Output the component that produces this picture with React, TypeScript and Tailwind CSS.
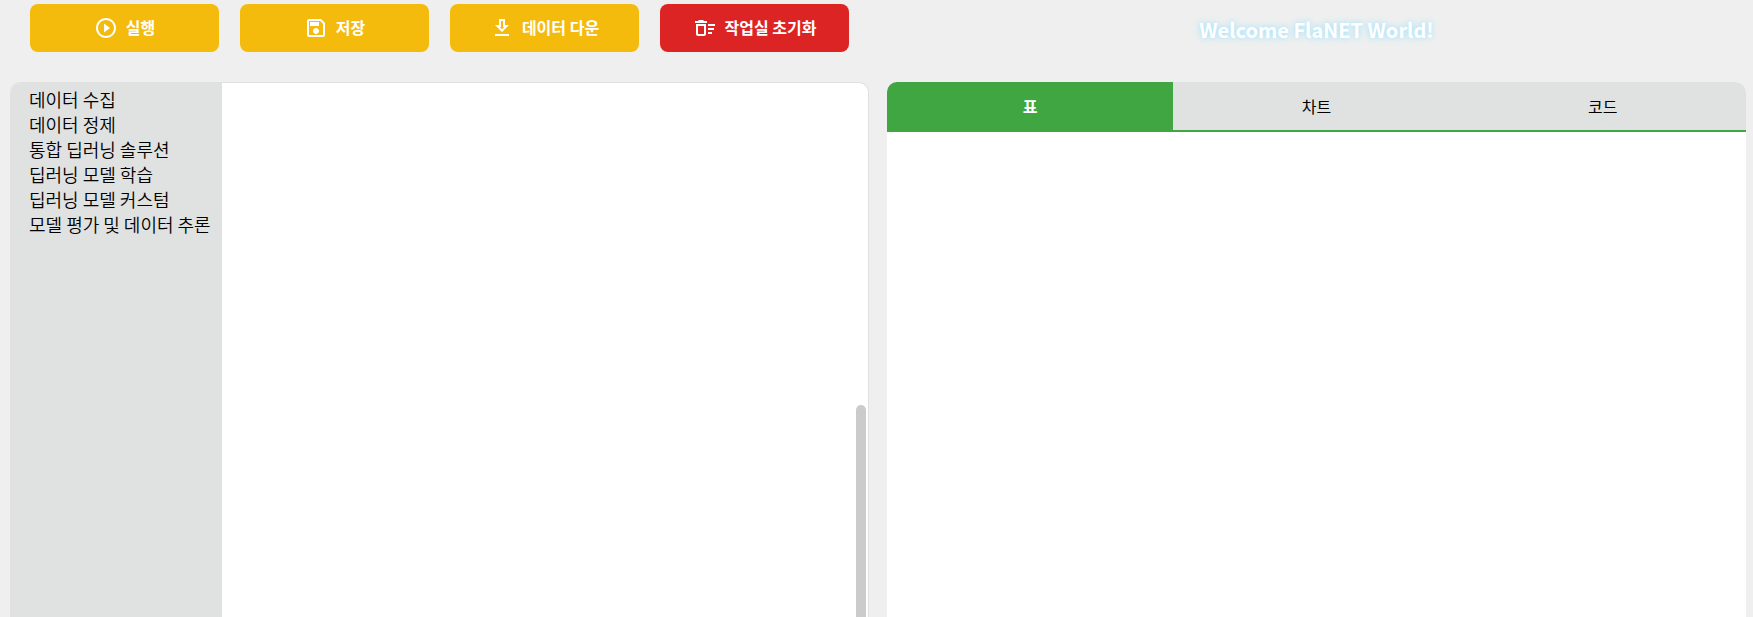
import React, { useState } from "react";

type Action = { label: string; icon: string; tone: string };

const actions: Action[] = [
  {
    label: "실행",
    icon: "M12 2C6.48 2 2 6.48 2 12s4.48 10 10 10 10-4.48 10-10S17.52 2 12 2zm0 18c-4.41 0-8-3.59-8-8s3.59-8 8-8 8 3.59 8 8-3.59 8-8 8zm-2-3.5l6-4.5-6-4.5z",
    tone: "bg-[#f5bb0c] hover:bg-[#e5ad05]",
  },
  {
    label: "저장",
    icon: "M17 3H5c-1.11 0-2 .9-2 2v14c0 1.1.89 2 2 2h14c1.1 0 2-.9 2-2V7l-4-4zm2 16H5V5h11.17L19 7.83V19zm-7-7c-1.66 0-3 1.34-3 3s1.34 3 3 3 3-1.34 3-3-1.34-3-3-3zM6 6h9v4H6z",
    tone: "bg-[#f5bb0c] hover:bg-[#e5ad05]",
  },
  {
    label: "데이터 다운",
    icon: "M19 9h-4V3H9v6H5l7 7 7-7zm-8 2V5h2v6h1.17L12 13.17 9.83 11H11zm-6 7h14v2H5z",
    tone: "bg-[#f5bb0c] hover:bg-[#e5ad05]",
  },
  {
    label: "작업실 초기화",
    icon: "M15 16h4v2h-4zm0-8h7v2h-7zm0 4h6v2h-6zM3 18c0 1.1.9 2 2 2h6c1.1 0 2-.9 2-2V8H3v10zm2-8h6v8H5v-8zm5-6H6L5 5H2v2h12V5h-3z",
    tone: "bg-[#dc2424] hover:bg-[#c41c1c]",
  },
];

const categories = [
  "데이터 수집",
  "데이터 정제",
  "통합 딥러닝 솔루션",
  "딥러닝 모델 학습",
  "딥러닝 모델 커스텀",
  "모델 평가 및 데이터 추론",
];

const tabs = ["표", "차트", "코드"];

export default function App() {
  const [active, setActive] = useState(0);

  return (
    <div className="grid h-screen grid-cols-2 grid-rows-[auto_1fr] gap-x-[18px] overflow-hidden bg-[#efefef] pr-[7px] pl-[10px] font-['Noto_Sans_CJK_KR','Noto_Sans',sans-serif] text-black">
      <div className="grid h-[82px] grid-cols-4 items-start gap-[21px] px-5 pt-1">
        {actions.map((action) => (
          <button
            key={action.label}
            type="button"
            className={`flex h-12 items-center justify-center gap-2 rounded-lg text-base font-bold whitespace-nowrap text-white ${action.tone}`}
          >
            <svg viewBox="0 0 24 24" className="size-6 shrink-0 fill-current" aria-hidden="true">
              <path d={action.icon} />
            </svg>
            <span className="pb-0.5">{action.label}</span>
          </button>
        ))}
      </div>

      <header className="flex h-[60px] items-center justify-center">
        <h1 className="text-xl font-bold whitespace-nowrap text-white [text-shadow:0_0_5px_#a5e3fb,0_0_10px_#c3e9f8]">
          Welcome FlaNET World!
        </h1>
      </header>

      <main className="flex min-h-0 overflow-hidden rounded-t-[10px] border border-b-0 border-[#e0e0e0] bg-white">
        <nav className="w-[211px] shrink-0 bg-[#e0e1e1] pt-1 pl-[18px]">
          <ul>
            {categories.map((category) => (
              <li key={category}>
                <a href="#" className="block text-lg leading-[25px] font-[350] whitespace-nowrap">
                  {category}
                </a>
              </li>
            ))}
          </ul>
        </nav>
        <div className="flex flex-1 justify-end pt-[322px] pr-0.5">
          <div className="w-[10px] rounded-t-full bg-[#cbcbcb]" />
        </div>
      </main>

      <section className="flex min-h-0 flex-col overflow-hidden rounded-t-[10px] bg-white">
        <div role="tablist" className="grid h-[50px] shrink-0 grid-cols-3 border-b-2 border-[#3fa642] bg-[#e0e1e1]">
          {tabs.map((tab, index) => (
            <button
              key={tab}
              type="button"
              role="tab"
              aria-selected={index === active}
              onClick={() => setActive(index)}
              className={`text-base ${index === active ? "bg-[#3fa642] font-bold text-white" : "font-normal"}`}
            >
              {tab}
            </button>
          ))}
        </div>
        <div role="tabpanel" aria-label={tabs[active]} className="flex-1" />
      </section>
    </div>
  );
}
